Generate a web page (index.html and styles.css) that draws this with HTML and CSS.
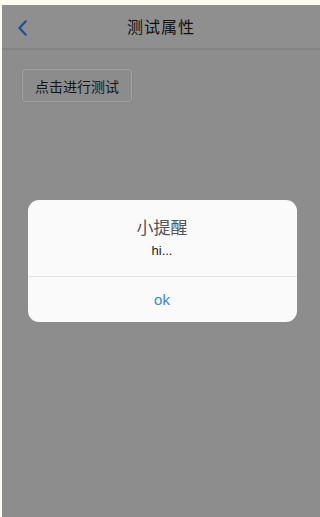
FILE: index.html
```html
<!DOCTYPE html>
<html lang="zh">
<head>
<meta charset="utf-8">
<title>测试属性</title>
<link rel="stylesheet" href="styles.css">
</head>
<body>
<div class="screen">
  <header class="nav">
    <span class="back">
      <svg width="11" height="16" viewBox="0 0 11 16"><path d="M8.5 1.5 L2.5 8 L8.5 14.5" fill="none" stroke="#24508f" stroke-width="2.4" stroke-linecap="round" stroke-linejoin="round"/></svg>
    </span>
    <h1 class="nav-title">测试属性</h1>
  </header>
  <main class="content">
    <button class="test-btn">点击进行测试</button>
  </main>
  <div class="overlay">
    <div class="dialog">
      <div class="dialog-body">
        <div class="dialog-title">小提醒</div>
        <div class="dialog-msg">hi...</div>
      </div>
      <div class="dialog-btn">ok</div>
    </div>
  </div>
</div>
</body>
</html>
```

FILE: styles.css
```css
html, body {
  margin: 0;
  padding: 0;
  height: 100%;
}
body {
  background: #fbfbee;
  font-family: "Noto Sans CJK SC", "Liberation Sans", sans-serif;
}
.screen {
  position: relative;
  margin: 5px 0 0 2px;
  height: calc(100% - 5px);
  background: #8d8d8d;
  overflow: hidden;
}
.nav {
  position: relative;
  height: 43px;
  background: #8f8f8f;
  border-bottom: 2px solid #838383;
  display: flex;
  align-items: center;
  justify-content: center;
}
.back {
  position: absolute;
  left: 15px;
  top: 15px;
  width: 11px;
  height: 16px;
  display: flex;
}
.nav-title {
  margin: 0;
  font-size: 16px;
  font-weight: normal;
  color: #111;
  letter-spacing: 1px;
  line-height: 22px;
  margin-top: -2px;
}
.content {
  padding: 19px 20px;
}
.test-btn {
  width: 110px;
  height: 33px;
  background: #8c8c8c;
  border: 1px solid #a2a2a2;
  border-radius: 3px;
  box-shadow: 0 0 0 1px #878787;
  font-family: "Noto Sans CJK SC", sans-serif;
  font-size: 14px;
  color: #151515;
  padding: 0;
}
.overlay {
  position: absolute;
  inset: 0;
  display: flex;
  align-items: center;
  justify-content: center;
}
.dialog {
  width: 269px;
  background: #fafafa;
  border-radius: 11px;
  margin-left: 2px;
  overflow: hidden;
}
.dialog-body {
  padding: 16px 0 16px;
  text-align: center;
  border-bottom: 1px solid #e2e2e2;
}
.dialog-title {
  font-size: 17px;
  line-height: 22px;
  color: #555;
}
.dialog-msg {
  margin-top: 4px;
  font-family: "Liberation Sans", sans-serif;
  font-size: 13px;
  line-height: 18px;
  color: #222;
}
.dialog-btn {
  height: 45px;
  line-height: 45px;
  text-align: center;
  font-family: "Liberation Sans", sans-serif;
  font-size: 15px;
  color: #3b86dc;
}
```
